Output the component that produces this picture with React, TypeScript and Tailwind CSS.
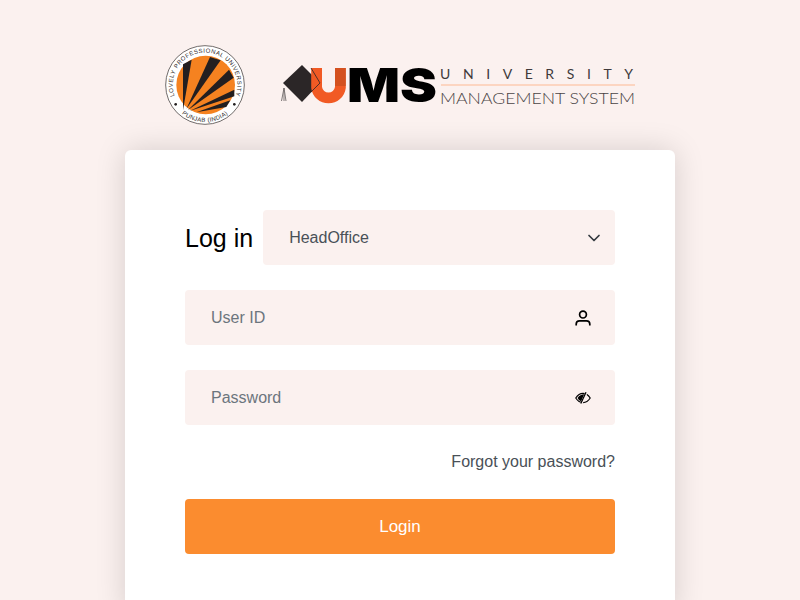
import React from "react";

function Seal() {
  return (
    <svg width="82" height="82" viewBox="27 27 246 246" className="block">
      <defs>
        <path id="ringTop" d="M 70.5 205.6 A 97 97 0 1 1 229.5 205.6" fill="none" />
        <path id="ringBottom" d="M 59.1 213.7 A 111 111 0 0 0 240.9 213.7" fill="none" />
      </defs>
      <circle cx="150" cy="150" r="118" fill="#ffffff" stroke="#55504f" strokeWidth="2.5" />
      <circle cx="152" cy="150" r="88" fill="#f58220" />
      <g fill="#231f20">
        <polygon points="84,226 84,88 110,74" />
        <polygon points="94,222 165,66 197,76" />
        <polygon points="98,226 222,104 236,128" />
        <polygon points="104,228 238,164 238,184" />
        <polygon points="124,232 226,196 214,216" />
      </g>
      <text fontFamily="'Liberation Sans', sans-serif" fontSize="18" fill="#2b2627" letterSpacing="1.5">
        <textPath href="#ringTop" startOffset="50%" textAnchor="middle">LOVELY PROFESSIONAL UNIVERSITY</textPath>
      </text>
      <text fontFamily="'Liberation Sans', sans-serif" fontSize="18" fill="#2b2627" letterSpacing="1">
        <textPath href="#ringBottom" startOffset="50%" textAnchor="middle">PUNJAB (INDIA)</textPath>
      </text>
      <circle cx="62" cy="208" r="4" fill="#231f20" />
      <circle cx="238" cy="208" r="4" fill="#231f20" />
    </svg>
  );
}

function UmsLogo() {
  return (
    <svg width="360" height="60" viewBox="280 55 360 60" className="block">
      <polygon points="283,83 302,65 320,83 302,102" fill="#2b2627" />
      <path d="M284 88 L281.5 101 M284 88 L284 101 M284 88 L286 101" stroke="#6f6a6a" strokeWidth="0.9" fill="none" />
      <path d="M316.6 68 V87.5 A12 12 0 0 0 340.4 87.5 V68" fill="none" stroke="#f15a24" strokeWidth="10.8" />
      <rect x="335" y="68" width="10.8" height="18" fill="#c94f1d" opacity="0.75" />
      <polyline points="311,68 320,83 311,92" fill="none" stroke="#2b2627" strokeWidth="0.8" />
      <text
        x="347"
        y="102"
        fontFamily="Inter, sans-serif"
        fontWeight="900"
        fontSize="47"
        textLength="90"
        lengthAdjust="spacingAndGlyphs"
        fill="#000"
      >
        MS
      </text>
      <text
        x="440"
        y="79"
        fontFamily="Lato, sans-serif"
        fontSize="14"
        textLength="193"
        fill="#3f3a3b"
      >
        UNIVERSITY
      </text>
      <rect x="441" y="84.5" width="194" height="1" fill="#fdb994" />
      <text
        x="440"
        y="103.5"
        fontFamily="Lato, sans-serif"
        fontWeight="300"
        fontSize="16.5"
        textLength="195"
        lengthAdjust="spacingAndGlyphs"
        fill="#4a4445"
      >
        MANAGEMENT SYSTEM
      </text>
    </svg>
  );
}

function Chevron() {
  return (
    <svg width="16" height="16" viewBox="0 0 16 16" fill="none" stroke="#343a40" strokeWidth="1.7" strokeLinecap="round" strokeLinejoin="round">
      <path d="M3 5.5 8 10.5 13 5.5" />
    </svg>
  );
}

function UserIcon() {
  return (
    <svg width="16" height="16" viewBox="0 0 16 16" fill="none" stroke="#000" strokeWidth="1.7">
      <circle cx="8" cy="4.6" r="3.4" />
      <path d="M1.2 15.5 V14 A3.3 3.3 0 0 1 4.5 10.8 H11.5 A3.3 3.3 0 0 1 14.8 14 V15.5" />
    </svg>
  );
}

function EyeIcon() {
  return (
    <svg width="16" height="16" viewBox="0 0 16 16" fill="none">
      <path d="M0.8 8 C3 4.5 5.5 3.4 8 3.4 C10.5 3.4 13 4.5 15.2 8 C13 11.5 10.5 12.6 8 12.6 C5.5 12.6 3 11.5 0.8 8 Z" stroke="#000" strokeWidth="1.2" />
      <path d="M2.6 8 C4.2 5.2 6.6 4.4 9.6 4.2 L6.2 11.4 C4.8 10.8 3.6 9.8 2.6 8 Z" fill="#000" />
      <path d="M11.6 2 L6.4 13.6" stroke="#fbf1ef" strokeWidth="2.4" />
      <path d="M11 2.2 L5.8 13.6" stroke="#000" strokeWidth="1.3" />
    </svg>
  );
}

export default function App() {
  return (
    <div className="h-screen overflow-hidden bg-[#fbf1ef] font-['Liberation_Sans',Arial,sans-serif]">
      <div className="flex h-[150px] items-start gap-[34px] pt-[44px] pl-[164px]">
        <Seal />
        <div className="mt-[11px]">
          <UmsLogo />
        </div>
      </div>
      <div className="mx-auto w-[550px] rounded-md bg-white p-[60px] shadow-[0_0_30px_rgba(0,0,0,0.15)]">
        <div className="flex items-center gap-[10px]">
          <span className="pt-[2px] text-[25px] leading-none text-black">Log in</span>
          <div className="flex h-[55px] flex-1 items-center justify-between rounded bg-[#fbf1ef] pr-[13px] pl-[26px] text-base text-[#495057]">
            <span>HeadOffice</span>
            <Chevron />
          </div>
        </div>
        <div className="mt-[25px] flex h-[55px] items-center rounded bg-[#fbf1ef] pr-6 pl-[26px]">
          <input
            placeholder="User ID"
            className="min-w-0 flex-1 bg-transparent text-base text-[#495057] outline-none placeholder:text-[#6c757d]"
          />
          <UserIcon />
        </div>
        <div className="mt-[25px] flex h-[55px] items-center rounded bg-[#fbf1ef] pr-6 pl-[26px]">
          <input
            placeholder="Password"
            className="min-w-0 flex-1 bg-transparent text-base text-[#495057] outline-none placeholder:text-[#6c757d]"
          />
          <EyeIcon />
        </div>
        <div className="mt-[27px] text-right text-base leading-[19px] text-[#495057]">Forgot your password?</div>
        <button className="mt-[28px] block h-[55px] w-full rounded bg-[#fb8c2f] text-[17px] text-white">Login</button>
      </div>
    </div>
  );
}
